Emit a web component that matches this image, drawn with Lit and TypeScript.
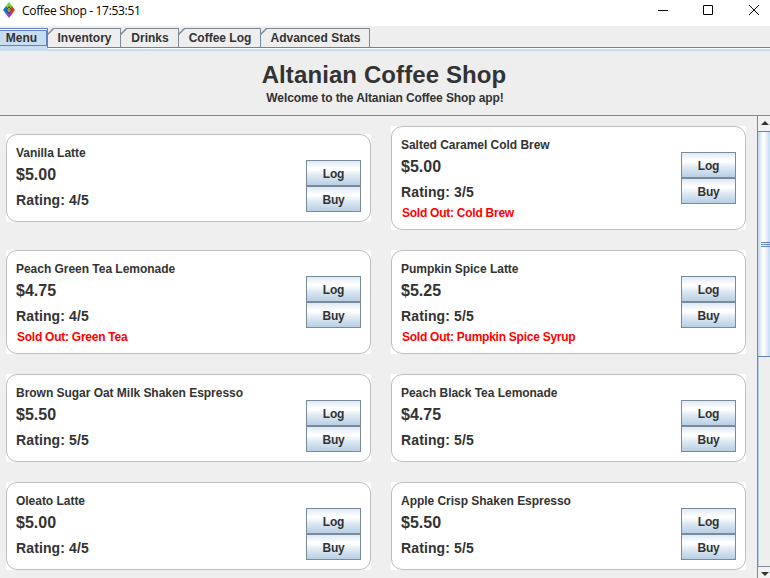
import { LitElement, html, css, svg, nothing } from "lit";
import { customElement, property } from "lit/decorators.js";

interface Drink {
  name: string;
  price: string;
  rating: number;
  soldOut?: string;
}

const DRINKS: Drink[] = [
  { name: "Vanilla Latte", price: "$5.00", rating: 4 },
  { name: "Salted Caramel Cold Brew", price: "$5.00", rating: 3, soldOut: "Cold Brew" },
  { name: "Peach Green Tea Lemonade", price: "$4.75", rating: 4, soldOut: "Green Tea" },
  { name: "Pumpkin Spice Latte", price: "$5.25", rating: 5, soldOut: "Pumpkin Spice Syrup" },
  { name: "Brown Sugar Oat Milk Shaken Espresso", price: "$5.50", rating: 5 },
  { name: "Peach Black Tea Lemonade", price: "$4.75", rating: 5 },
  { name: "Oleato Latte", price: "$5.00", rating: 4 },
  { name: "Apple Crisp Shaken Espresso", price: "$5.50", rating: 5 },
];

const TABS = [
  { label: "Menu", width: 48 },
  { label: "Inventory", width: 73 },
  { label: "Drinks", width: 58 },
  { label: "Coffee Log", width: 82 },
  { label: "Advanced Stats", width: 109 },
];

@customElement("drink-card")
class DrinkCard extends LitElement {
  @property({ attribute: false }) drink!: Drink;

  static styles = css`
    :host { display: block; background: #fff; align-self: center; }
    .card {
      box-sizing: border-box;
      border: 1px solid #bdbdbd;
      border-radius: 11px;
      display: flex;
      justify-content: space-between;
      padding: 10px 9px 7px;
      min-height: 88px;
    }
    .info { display: flex; flex-direction: column; white-space: nowrap; }
    .name { font-size: 12px; line-height: 16px; letter-spacing: -0.03px; }
    .price { font-size: 16px; line-height: 26px; padding-top: 1px; }
    .rating { font-size: 14px; line-height: 25px; letter-spacing: 0.12px; }
    .sold { font-size: 12px; line-height: 17px; color: #f00; letter-spacing: -0.25px; padding-left: 1px; }
    .buttons { padding-top: 15px; }
    button {
      display: block;
      box-sizing: border-box;
      width: 55px;
      height: 26px;
      padding: 2px 0 0;
      border: 1px solid #7a8a99;
      border-radius: 0;
      font: bold 12px "Liberation Sans", Arial, sans-serif;
      letter-spacing: -0.15px;
      color: #333;
      background: linear-gradient(#dde8f3 0%, #fff 30%, #fff 36%, #dce7f2 62%, #b8cfe5 100%);
    }
  `;

  render() {
    const d = this.drink;
    return html`
      <div class="card">
        <div class="info">
          <div class="name">${d.name}</div>
          <div class="price">${d.price}</div>
          <div class="rating">Rating: ${d.rating}/5</div>
          ${d.soldOut ? html`<div class="sold">Sold Out: ${d.soldOut}</div>` : nothing}
        </div>
        <div class="buttons"><button>Log</button><button>Buy</button></div>
      </div>
    `;
  }
}

@customElement("app-root")
class AppRoot extends LitElement {
  static styles = css`
    :host {
      display: flex;
      flex-direction: column;
      width: 770px;
      height: 578px;
      overflow: hidden;
      background: #eee;
      color: #333;
      font: bold 12px "Liberation Sans", Arial, sans-serif;
    }
    svg { display: block; }
    .titlebar {
      flex: none;
      height: 26px;
      background: #fff;
      display: flex;
      color: #000;
    }
    .logo { margin: 2px 0 0 3px; }
    .caption {
      font: 12px/15px "Open Sans", "Noto Sans", sans-serif;
      margin: 3px 0 0 7px;
      flex: 1;
      white-space: nowrap;
      letter-spacing: -0.32px;
    }
    .tabs {
      flex: none;
      box-sizing: border-box;
      display: flex;
      height: 23px;
      padding-top: 2px;
      background: linear-gradient(#eee 21px, #6382bf 21px, #6382bf 22px, #fff 22px, #fff 23px);
    }
    .tab {
      box-sizing: border-box;
      height: 19px;
      border-top: 1px solid #7a8a99;
      border-right: 1px solid #7a8a99;
      text-align: center;
      line-height: 18px;
      padding-left: 1px;
      background: #eee;
      white-space: nowrap;
      clip-path: polygon(0 5px, 5px 0, 100% 0, 100% 100%, 0 100%);
    }
    .tab.plain { background: linear-gradient(135deg, #7a8a99 4.2px, #eee 4.3px); }
    .tab.active {
      height: 20px;
      padding: 1px 0 0;
      background: #c8ddf2;
      border-top: 1px solid #6382bf;
      border-right: 1px solid #6382bf;
      clip-path: none;
      box-shadow: inset 0 1px #fff, 0 1px #c8ddf2;
    }
    .focus {
      box-sizing: border-box;
      height: 16px;
      border: solid #6382bf;
      border-width: 1px 1px 1px 0;
      line-height: 14px;
      padding-right: 3px;
    }
    .under { flex: none; height: 2px; background: #c8ddf2; }
    .head {
      flex: none;
      box-sizing: border-box;
      height: 65px;
      border-bottom: 1px solid #7a8a99;
      text-align: center;
    }
    .title { font-size: 24px; line-height: 28px; padding-top: 10px; letter-spacing: 0.1px; padding-right: 2px; }
    .welcome { line-height: 14px; padding-top: 2px; letter-spacing: -0.1px; }
    .body { flex: 1; min-height: 0; display: flex; }
    .grid {
      box-sizing: border-box;
      width: 757px;
      padding: 10px 11px 0 6px;
      display: grid;
      grid-template-columns: 365px 355px;
      column-gap: 20px;
      row-gap: 20px;
      align-content: start;
      background: #efefef;
    }
    .scroll {
      width: 13px;
      box-sizing: border-box;
      border-left: 1px solid #7a8a99;
      display: flex;
      flex-direction: column;
      overflow: hidden;
    }
    .arrow { height: 15px; flex: none; background: #f2f2f2; }
    .thumb {
      flex: none;
      box-sizing: border-box;
      height: 226px;
      padding-top: 1px;
      border: solid #6382bf;
      border-width: 1px 0;
      background: linear-gradient(90deg, #c8ddf2 1px, #dde8f3 2px, #fff 5px, #fff 6px, #c3d8ef 12px);
      display: flex;
      align-items: center;
    }
    .track {
      flex: 1;
      border-bottom: 1px solid #7a8a99;
      background: linear-gradient(90deg, #b8cfe5 1px, #eee 1px);
    }
    .arrow.down { height: 11px; }
  `;

  render() {
    return html`
      <div class="titlebar">
        <svg class="logo" width="12" height="16" viewBox="0 0 12 16">
          ${svg`
            <path d="M6 0L9.5 4.5L6 8L2.5 4.5Z" fill="#6fdc2c"/>
            <path d="M6 8L9.5 11.5L6 16L2.5 11.5Z" fill="#9a38e6"/>
            <path d="M3 4L6 8L3 12L0 8Z" fill="#1976dc"/>
            <path d="M9 4L12 8L9 12L6 8Z" fill="#e83b1d"/>
            <path d="M6 4.5L8.2 8L6 11.5L3.8 8Z" fill="#ffe34a" stroke="#222" stroke-width=".8"/>
            <path d="M5.6 6.5h.8v3h-.8z" fill="#222"/>
          `}
        </svg>
        <div class="caption">Coffee Shop - 17:53:51</div>
        <svg width="112" height="26" viewBox="658 0 112 26" fill="none" stroke="#000">
          <path d="M658 10.5h10M703.5 5.5h9v9h-9zM749 5l10 10M759 5l-10 10"/>
        </svg>
      </div>
      <div class="tabs">
        ${TABS.map((t, i) =>
          i === 0
            ? html`<div class="tab active" style="width:${t.width}px"><div class="focus">${t.label}</div></div>`
            : html`<div class="tab plain" style="width:${t.width}px">${t.label}</div>`
        )}
      </div>
      <div class="under"></div>
      <div class="head">
        <div class="title">Altanian Coffee Shop</div>
        <div class="welcome">Welcome to the Altanian Coffee Shop app!</div>
      </div>
      <div class="body">
        <div class="grid">${DRINKS.map((d) => html`<drink-card .drink=${d}></drink-card>`)}</div>
        <div class="scroll">
          <div class="arrow">
            <svg width="12" height="15"><path d="M3 9h8L7 5Z" fill="#333"/></svg>
          </div>
          <div class="thumb">
            <svg width="12" height="6" shape-rendering="crispEdges">
              <path d="M3 .5h9M3 2.5h9M3 4.5h9" stroke="#6382bf"/>
            </svg>
          </div>
          <div class="track"></div>
          <div class="arrow down">
            <svg width="12" height="11"><path d="M3 5h8L7 9Z" fill="#333"/></svg>
          </div>
        </div>
      </div>
    `;
  }
}
